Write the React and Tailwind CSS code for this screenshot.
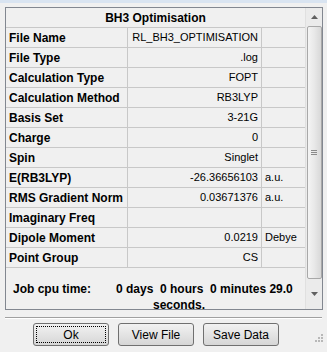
const rows = [
  ['File Name', 'RL_BH3_OPTIMISATION', ''],
  ['File Type', '.log', ''],
  ['Calculation Type', 'FOPT', ''],
  ['Calculation Method', 'RB3LYP', ''],
  ['Basis Set', '3-21G', ''],
  ['Charge', '0', ''],
  ['Spin', 'Singlet', ''],
  ['E(RB3LYP)', '-26.36656103', 'a.u.'],
  ['RMS Gradient Norm', '0.03671376', 'a.u.'],
  ['Imaginary Freq', '', ''],
  ['Dipole Moment', '0.0219', 'Debye'],
  ['Point Group', 'CS', ''],
];

const Btn = ({ children, focus }) => (
  <button className="w-[76px] h-[23px] rounded-[3px] border border-[#707070] bg-gradient-to-b from-[#f2f2f2] to-[#d6d6d6] text-[12px] text-black flex items-center justify-center">
    <span className={focus ? 'w-[70px] h-[17px] flex items-center justify-center border border-dotted border-black' : ''}>{children}</span>
  </button>
);

export default function App() {
  return (
    <div className="w-[327px] h-[352px] bg-[#f0f0f0] flex flex-col overflow-hidden" style={{ fontFamily: '"Liberation Sans", Arial, sans-serif' }}>
      <div className="h-[3px] shrink-0 bg-[#d9e4f1]" />
      {/* panel */}
      <div className="mt-[4px] ml-[5px] w-[318px] h-[303px] shrink-0 border border-[#828790] flex">
        <div className="w-[300px] flex flex-col">
          <div className="h-[20px] shrink-0 border-b border-[#c8c8c8] flex items-center justify-center font-bold text-[12px] text-black">BH3 Optimisation</div>
          {rows.map(([label, value, unit]) => (
            <div key={label} className="h-[20px] shrink-0 border-b border-[#c8c8c8] flex text-black">
              <div className="w-[122px] border-r border-[#c8c8c8] font-bold text-[12px] pl-[3px] flex items-center">{label}</div>
              <div className="w-[134px] border-r border-[#c8c8c8] text-[11px] pr-[3px] flex items-center justify-end">{value}</div>
              <div className="flex-1 pl-[3px] text-[11px] flex items-center">{unit}</div>
            </div>
          ))}
          <div className="flex font-bold text-[12px] text-black pt-[13px] leading-[16px]">
            <div className="w-[110px] pl-[7px]">Job cpu time:</div>
            <div>
              <div className="whitespace-pre">0 days  0 hours  0 minutes 29.0</div>
              <div className="pl-[37px]">seconds.</div>
            </div>
          </div>
        </div>
        {/* scrollbar */}
        <div className="w-[17px] border-l border-[#e0e0e0] bg-[#ebebeb] flex flex-col items-center">
          <div className="h-[18px] shrink-0 flex items-center justify-center">
            <svg width="7" height="4" viewBox="0 0 7 4"><path d="M0 4 L3.5 0 L7 4 Z" fill="#606060" /></svg>
          </div>
          <div className="w-[15px] h-[253px] shrink-0 rounded-[2px] border border-[#a8a8a8] bg-gradient-to-r from-[#f4f4f4] via-[#e8e8e8] to-[#d8d8d8] flex items-center justify-center">
            <div className="flex flex-col gap-[1px]">
              <div className="w-[6px] h-px bg-[#8a8a8a]" />
              <div className="w-[6px] h-px bg-[#8a8a8a]" />
              <div className="w-[6px] h-px bg-[#8a8a8a]" />
            </div>
          </div>
          <div className="flex-1 flex items-center justify-center">
            <svg width="7" height="4" viewBox="0 0 7 4"><path d="M0 0 L3.5 4 L7 0 Z" fill="#606060" /></svg>
          </div>
        </div>
      </div>
      <div className="mt-[7px] mx-[5px] h-[2px] shrink-0 bg-[#a0a0a0] border-b border-white" />
      <div className="relative flex-1">
        <div className="flex gap-[9px] pl-[33px] pt-[4px]">
          <Btn focus>Ok</Btn>
          <Btn>View File</Btn>
          <Btn>Save Data</Btn>
        </div>
        <svg className="absolute right-[4px] bottom-[10px]" width="8" height="8" viewBox="0 0 8 8">
          <g fill="#b8b8b8">
            <rect x="6" y="0" width="2" height="2" />
            <rect x="3" y="3" width="2" height="2" />
            <rect x="6" y="3" width="2" height="2" />
            <rect x="0" y="6" width="2" height="2" />
            <rect x="3" y="6" width="2" height="2" />
            <rect x="6" y="6" width="2" height="2" />
          </g>
        </svg>
      </div>
    </div>
  );
}
